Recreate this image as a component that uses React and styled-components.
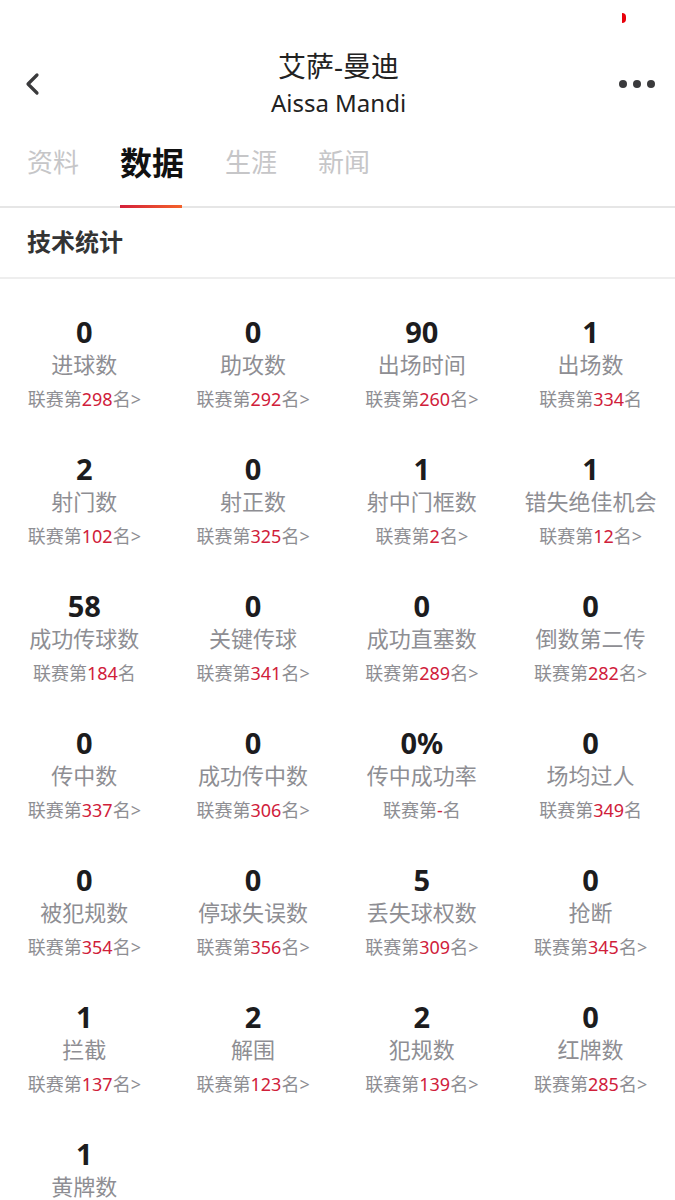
import React from 'react';
import styled, { createGlobalStyle } from 'styled-components';

const GlobalStyle = createGlobalStyle`
  html, body {
    margin: 0;
    padding: 0;
    background: #fff;
  }
  body {
    font-family: "Noto Sans", "Noto Sans CJK SC", sans-serif;
    -webkit-font-smoothing: antialiased;
  }
`;

const Page = styled.div`
  width: 675px;
  height: 1200px;
  overflow: hidden;
  background: #fff;
`;

const StatusBar = styled.div`
  height: 40px;
  display: flex;
  justify-content: flex-end;
  align-items: flex-start;
  padding: 13px 49px 0 0;
  box-sizing: border-box;
`;

const Recorder = styled.span`
  width: 4px;
  height: 10px;
  background: #e8000b;
  border-radius: 0 5px 5px 0;
`;

const NavBar = styled.div`
  height: 84px;
  box-sizing: border-box;
  padding: 3px 20px 0 22px;
  display: flex;
  align-items: center;
  justify-content: space-between;
`;

const IconButton = styled.div`
  width: 40px;
  height: 40px;
  display: flex;
  align-items: center;
  justify-content: ${({ $end }) => ($end ? 'flex-end' : 'flex-start')};
`;

const TitleBlock = styled.div`
  display: flex;
  flex-direction: column;
  align-items: center;
`;

const Title = styled.div`
  font-size: 28px;
  line-height: 36px;
  color: #222;
`;

const SubTitle = styled.div`
  font-size: 24px;
  line-height: 34px;
  margin-top: 2px;
  color: #222;
  font-family: "Noto Sans", sans-serif;
`;

const Dots = styled.div`
  display: flex;
  gap: 6px;
`;

const Dot = styled.span`
  width: 8px;
  height: 8px;
  border-radius: 50%;
  background: #3a3a3c;
`;

const Tabs = styled.div`
  display: flex;
  align-items: flex-end;
  gap: 41px;
  padding: 0 27px;
  height: 82px;
  border-bottom: 2px solid #e6e6e6;
`;

const Tab = styled.div`
  position: relative;
  height: 78px;
  box-sizing: border-box;
  display: flex;
  align-items: center;
  font-size: ${({ $active }) => ($active ? '32px' : '26px')};
  font-weight: ${({ $active }) => ($active ? 700 : 400)};
  color: ${({ $active }) => ($active ? '#111' : '#c6c6c8')};
  margin-bottom: -2px;
  padding-bottom: 16px;

  &::after {
    content: '';
    display: ${({ $active }) => ($active ? 'block' : 'none')};
    position: absolute;
    left: 0;
    right: 2px;
    bottom: 0;
    height: 3px;
    background: linear-gradient(90deg, #d4203a, #f4622a);
  }
`;

const SectionHead = styled.div`
  height: 71px;
  box-sizing: border-box;
  display: flex;
  align-items: center;
  padding: 0 27px 5px;
  font-size: 24px;
  font-weight: 700;
  color: #333;
  border-bottom: 2px solid #eeeeee;
`;

const Grid = styled.div`
  display: grid;
  grid-template-columns: repeat(4, 1fr);
  padding-top: 17px;
`;

const Cell = styled.div`
  height: 137px;
  padding-top: 20px;
  box-sizing: border-box;
  display: flex;
  flex-direction: column;
  align-items: center;
  white-space: nowrap;
`;

const Value = styled.div`
  font-size: 29px;
  line-height: 32px;
  font-weight: 700;
  color: #1c1c1e;
`;

const Label = styled.div`
  font-size: 22px;
  line-height: 33px;
  color: #8e8e93;
`;

const Rank = styled.div`
  font-size: 18px;
  line-height: 34px;
  margin-top: 1px;
  color: #8e8e93;
`;

const RankNum = styled.span`
  color: #d0203a;
`;

const stats = [
  ['0', '进球数', '298', true],
  ['0', '助攻数', '292', true],
  ['90', '出场时间', '260', true],
  ['1', '出场数', '334', false],
  ['2', '射门数', '102', true],
  ['0', '射正数', '325', true],
  ['1', '射中门框数', '2', true],
  ['1', '错失绝佳机会', '12', true],
  ['58', '成功传球数', '184', false],
  ['0', '关键传球', '341', true],
  ['0', '成功直塞数', '289', true],
  ['0', '倒数第二传', '282', true],
  ['0', '传中数', '337', true],
  ['0', '成功传中数', '306', true],
  ['0%', '传中成功率', '-', false],
  ['0', '场均过人', '349', false],
  ['0', '被犯规数', '354', true],
  ['0', '停球失误数', '356', true],
  ['5', '丢失球权数', '309', true],
  ['0', '抢断', '345', true],
  ['1', '拦截', '137', true],
  ['2', '解围', '123', true],
  ['2', '犯规数', '139', true],
  ['0', '红牌数', '285', true],
  ['1', '黄牌数', null, false],
];

const BackIcon = () => (
  <svg width="20" height="24" viewBox="0 0 20 24">
    <path d="M15 3 L6 12 L15 21" fill="none" stroke="#3a3a3c" strokeWidth="3.2" strokeLinecap="round" strokeLinejoin="round" />
  </svg>
);

const App = () => {
  return (
    <Page>
      <GlobalStyle />
      <StatusBar>
        <Recorder />
      </StatusBar>
      <NavBar>
        <IconButton>
          <BackIcon />
        </IconButton>
        <TitleBlock>
          <Title>艾萨-曼迪</Title>
          <SubTitle>Aissa Mandi</SubTitle>
        </TitleBlock>
        <IconButton $end>
          <Dots>
            <Dot />
            <Dot />
            <Dot />
          </Dots>
        </IconButton>
      </NavBar>
      <Tabs>
        <Tab>资料</Tab>
        <Tab $active>数据</Tab>
        <Tab>生涯</Tab>
        <Tab>新闻</Tab>
      </Tabs>
      <SectionHead>技术统计</SectionHead>
      <Grid>
        {stats.map(([value, label, rank, more], i) => (
          <Cell key={i}>
            <Value>{value}</Value>
            <Label>{label}</Label>
            {rank !== null && (
              <Rank>
                联赛第<RankNum>{rank}</RankNum>名{more ? '>' : ''}
              </Rank>
            )}
          </Cell>
        ))}
      </Grid>
    </Page>
  );
};

export default App;
